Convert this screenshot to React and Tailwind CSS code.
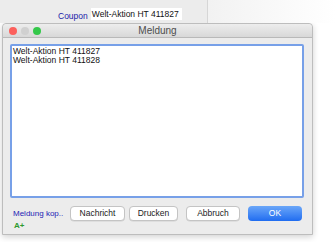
import React from 'react';

const Btn = ({ label, className }) => (
  <div
    className={`h-[15px] flex items-center justify-center rounded-[4px] border border-[#c4c4c4] bg-white text-[8.5px] text-[#222] shadow-[0_0.5px_0.5px_rgba(0,0,0,0.12)] ${className}`}
  >
    {label}
  </div>
);

export default function App() {
  return (
    <div
      className="w-[336px] h-[242px] bg-white overflow-hidden relative"
      style={{ fontFamily: '"Liberation Sans", Arial, sans-serif' }}
    >
      {/* Hintergrundfenster */}
      <div className="h-[23px] flex">
        <div className="w-[208px] bg-[#ececec] border-r border-[#d6d6d6] flex items-end pb-[3px]">
          <span className="ml-[58px] text-[8.5px] text-[#1a1aa8] leading-none whitespace-nowrap">Coupon</span>
          <div className="ml-[3px] w-[91px] h-[12px] bg-white flex items-center pl-[1px] text-[8.5px] text-[#111] leading-none whitespace-nowrap overflow-hidden">
            Welt-Aktion HT 411827
          </div>
        </div>
        <div className="flex-1 bg-gradient-to-r from-[#f2f2f2] to-white" />
      </div>

      {/* Meldung */}
      <div className="ml-[2px] w-[311px] h-[212px] bg-[#ececec] border border-[#bdbdbd] rounded-t-[4px] shadow-[0_2px_6px_rgba(0,0,0,0.18)] flex flex-col">
        <div className="h-[14px] relative flex items-center justify-center bg-gradient-to-b from-[#ededed] to-[#d8d8d8] border-b border-[#b9b9b9] rounded-t-[4px]">
          <div className="absolute left-[6px] top-[3px] flex gap-[4px]">
            <span className="w-[8px] h-[8px] rounded-full bg-[#fc605c]" />
            <span className="w-[8px] h-[8px] rounded-full bg-[#d0d0d0]" />
            <span className="w-[8px] h-[8px] rounded-full bg-[#34c84a]" />
          </div>
          <span className="text-[10px] text-[#4d4d4d] leading-none">Meldung</span>
        </div>

        <div className="mt-[6px] ml-[7px] w-[294px] h-[154px] bg-white border-2 border-[#77a0e8] rounded-[2px] px-[1px] pt-[1px] text-[8.5px] leading-[9px] text-[#111]">
          <div>Welt-Aktion HT 411827</div>
          <div>Welt-Aktion HT 411828</div>
        </div>

        <div className="mt-[8px] flex items-center">
          <span className="ml-[10px] w-[57px] text-[8px] text-[#1d1db5] whitespace-nowrap">Meldung kop..</span>
          <Btn label="Nachricht" className="w-[55px]" />
          <Btn label="Drucken" className="ml-[4px] w-[49px]" />
          <Btn label="Abbruch" className="ml-[8px] w-[54px]" />
          <div className="ml-[8px] w-[54px] h-[15px] rounded-[4px] bg-gradient-to-b from-[#6aa6f8] to-[#1f6cf0] flex items-center justify-center text-[8.5px] text-white">
            OK
          </div>
        </div>
        <div className="ml-[11px] mt-[1px] text-[8px] font-bold text-[#2e9a2e] leading-none">A+</div>
      </div>
    </div>
  );
}
